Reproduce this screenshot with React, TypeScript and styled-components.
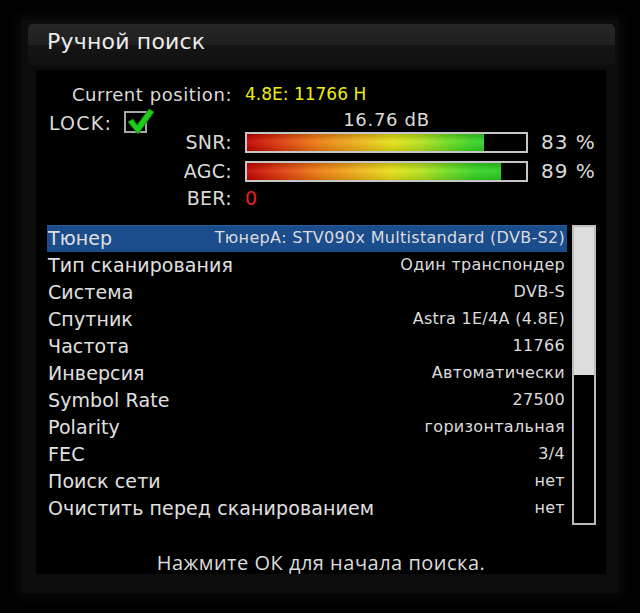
import React from 'react';
import styled, { createGlobalStyle } from 'styled-components';

const GlobalStyle = createGlobalStyle`
    html, body {
        margin: 0;
        padding: 0;
        background: #020202;
    }
    * {
        box-sizing: border-box;
    }
`;

const Screen = styled.div`
    width: 640px;
    height: 613px;
    padding: 20px 22px 20px 22px;
    background: #020202;
    font-family: "DejaVu Sans", "Liberation Sans", sans-serif;
    color: #dadada;
`;

const Panel = styled.div`
    display: flex;
    flex-direction: column;
    height: 573px;
    padding: 4px 3px 19px 6px;
    background: #0c0c0c;
    box-shadow: 0 0 10px 4px #0a0a0a;
`;

const TitleBar = styled.div`
    display: flex;
    align-items: flex-start;
    height: 41px;
    padding: 5px 0 0 19px;
    border-radius: 5px;
    background: linear-gradient(#272727 0%, #1f1f1f 50%, #141414 52%, #111111 100%);
    font-size: 22px;
    color: #ececec;
    letter-spacing: 0.2px;
`;

const Content = styled.div`
    display: flex;
    flex-direction: column;
    margin: 5px 9px 0 8px;
    height: 504px;
    background: #000;
`;

const StatusGrid = styled.div`
    display: grid;
    grid-template-columns: 196px 283px 1fr;
    column-gap: 13px;
    padding-top: 12px;
`;

const StatusRow = styled.div<{ $h: number; $mt?: number }>`
    display: contents;
    & > * {
        height: ${(p) => p.$h}px;
        margin-top: ${(p) => p.$mt ?? 0}px;
    }
`;

const Label = styled.div<{ $size?: number; $spacing?: number }>`
    display: flex;
    align-items: center;
    justify-content: flex-end;
    font-size: ${(p) => p.$size ?? 19}px;
    letter-spacing: ${(p) => p.$spacing ?? 0.3}px;
    white-space: nowrap;
`;

const Value = styled.div<{ $color?: string; $size?: number; $spacing?: number; $center?: boolean }>`
    display: flex;
    align-items: center;
    justify-content: ${(p) => (p.$center ? 'center' : 'flex-start')};
    font-size: ${(p) => p.$size ?? 18}px;
    letter-spacing: ${(p) => p.$spacing ?? 0.5}px;
    color: ${(p) => p.$color ?? '#dadada'};
    white-space: nowrap;
`;

const LockCell = styled.div`
    display: flex;
    align-items: center;
    gap: 12px;
    padding: 7px 0 0 13px;
    font-size: 19px;
    letter-spacing: 1.2px;
`;

const CheckBox = styled.div`
    position: relative;
    width: 23px;
    height: 22px;
    margin-top: -2px;
    border: 2px solid #a8a8a8;

    svg {
        position: absolute;
        left: 0;
        top: -6px;
    }
`;

const Bar = styled.div`
    align-self: center;
    height: 21px !important;
    border: 2px solid #c6c6c6;
    background: #000;
`;

const BarFill = styled.div`
    height: 100%;
    background:
        linear-gradient(rgba(0, 0, 0, 0.18), rgba(255, 255, 255, 0.08) 45%, rgba(0, 0, 0, 0.12)),
        linear-gradient(90deg, #c40000 0%, #e03a0c 12%, #f07a10 25%, #f0b418 40%, #e6e214 52%, #b8e41c 62%, #6ede20 72%, #34d424 82%, #22c81e 100%);
`;

const Percent = styled.div`
    display: flex;
    align-items: center;
    font-size: 20px;
    letter-spacing: 1px;
    white-space: nowrap;
`;

const ListArea = styled.div`
    display: flex;
    gap: 5px;
    margin: 17px 0 0 11px;
`;

const List = styled.div`
    display: flex;
    flex-direction: column;
    width: 520px;
`;

const Row = styled.div<{ $active?: boolean }>`
    display: flex;
    align-items: center;
    justify-content: space-between;
    height: 27px;
    padding: 0 2px 3px 1px;
    background: ${(p) => (p.$active ? '#1b4c8c' : 'transparent')};
    border-top: 1px solid ${(p) => (p.$active ? '#2a5c9c' : 'transparent')};
`;

const RowLabel = styled.span`
    font-size: 19px;
    letter-spacing: 0.1px;
    color: #e0e0e0;
    white-space: nowrap;
`;

const RowValue = styled.span`
    font-size: 16px;
    letter-spacing: 0.3px;
    color: #dcdcdc;
    white-space: nowrap;
`;

const ScrollTrack = styled.div`
    width: 24px;
    height: 300px;
    border: 2px solid #bdbdbd;
    background: #000;
`;

const ScrollThumb = styled.div`
    height: 50%;
    background: #dcdcdc;
`;

const Footer = styled.div`
    margin-top: auto;
    margin-bottom: -2px;
    text-align: center;
    font-family: "Open Sans", "DejaVu Sans", sans-serif;
    font-size: 20px;
    letter-spacing: 0.5px;
    color: #dcdcdc;
`;

const rows: Array<[string, string]> = [
    ['Тюнер', 'ТюнерА: STV090x Multistandard (DVB-S2)'],
    ['Тип сканирования', 'Один транспондер'],
    ['Система', 'DVB-S'],
    ['Спутник', 'Astra 1E/4A (4.8E)'],
    ['Частота', '11766'],
    ['Инверсия', 'Автоматически'],
    ['Symbol Rate', '27500'],
    ['Polarity', 'горизонтальная'],
    ['FEC', '3/4'],
    ['Поиск сети', 'нет'],
    ['Очистить перед сканированием', 'нет'],
];

const CheckMark = () => (
    <svg width="30" height="30" viewBox="0 0 30 30">
        <path
            d="M2 15 L7 12 L11 18 L23 2 L28 5 L12 27 Z"
            fill="#1ecc1e"
            stroke="#0a7a0a"
            strokeWidth="1"
            strokeLinejoin="round"
        />
    </svg>
);

const SignalBar: React.FC<{ value: number }> = ({ value }) => (
    <Bar>
        <BarFill
            style={{
                width: `${value}%`,
                backgroundSize: `100% 100%, ${(100 / value) * 100}% 100%`,
            }}
        />
    </Bar>
);

const App: React.FC = () => {
    return (
        <>
            <GlobalStyle />
            <Screen>
                <Panel>
                    <TitleBar>Ручной поиск</TitleBar>

                    <Content>
                        <StatusGrid>
                            <StatusRow $h={24}>
                                <Label $size={18} $spacing={0.55}>Current position:</Label>
                                <Value $color="#eeee10" $size={17} $spacing={0}>4.8E: 11766 H</Value>
                                <div />
                            </StatusRow>

                            <StatusRow $h={26}>
                                <LockCell>
                                    LOCK:
                                    <CheckBox>
                                        <CheckMark />
                                    </CheckBox>
                                </LockCell>
                                <Value $center $size={18} $spacing={0.7}>16.76 dB</Value>
                                <div />
                            </StatusRow>

                            <StatusRow $h={20}>
                                <Label>SNR:</Label>
                                <SignalBar value={85} />
                                <Percent>83 %</Percent>
                            </StatusRow>

                            <StatusRow $h={20} $mt={8}>
                                <Label>AGC:</Label>
                                <SignalBar value={91} />
                                <Percent>89 %</Percent>
                            </StatusRow>

                            <StatusRow $h={20} $mt={6}>
                                <Label>BER:</Label>
                                <Value $color="#e82020" $size={19}>0</Value>
                                <div />
                            </StatusRow>
                        </StatusGrid>

                        <ListArea>
                            <List>
                                {rows.map(([label, value], index) => (
                                    <Row key={label} $active={index === 0}>
                                        <RowLabel>{label}</RowLabel>
                                        <RowValue>{value}</RowValue>
                                    </Row>
                                ))}
                            </List>
                            <ScrollTrack>
                                <ScrollThumb />
                            </ScrollTrack>
                        </ListArea>

                        <Footer>Нажмите ОК для начала поиска.</Footer>
                    </Content>
                </Panel>
            </Screen>
        </>
    );
};

export default App;
